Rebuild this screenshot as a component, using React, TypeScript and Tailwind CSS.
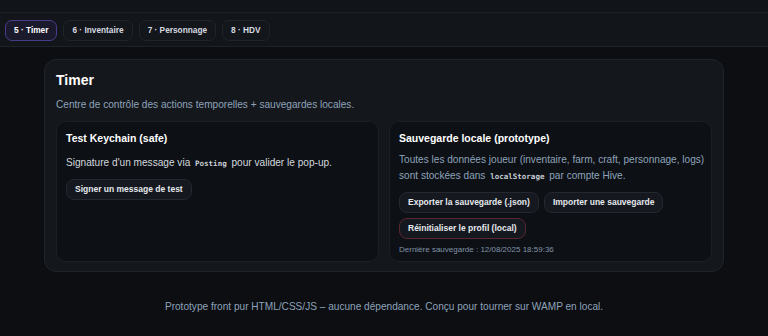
const tabs = ["5 · Timer", "6 · Inventaire", "7 · Personnage", "8 · HDV"];

function Btn({ children, danger }: { children: React.ReactNode; danger?: boolean }) {
  return (
    <button
      className={
        "h-[21px] px-[8px] rounded-[8px] bg-[#15181e] text-[8.5px] font-bold text-[#e6e9ee] border " +
        (danger ? "border-[#5a2630]" : "border-[#242830]")
      }
    >
      {children}
    </button>
  );
}

export default function App() {
  return (
    <div className="min-h-screen bg-[#0c0e12] font-['Liberation_Sans',Arial,sans-serif] text-[#e6e9ee]">
      <div className="h-[13px] bg-[#111418] border-b border-[#1d2128]"></div>
      <nav className="flex gap-[6px] px-[5px] pt-[7px] pb-[5px] bg-[#121519] border-b border-[#1d2128]">
        {tabs.map((t, i) => (
          <button
            key={t}
            className={
              "h-[21px] px-[8px] rounded-[7px] text-[8.3px] font-bold border " +
              (i === 0
                ? "bg-[#1a1a2c] border-[#4a3b8c] text-white"
                : "bg-[#13161b] border-[#20242b] text-[#d6dae0]")
            }
          >
            {t}
          </button>
        ))}
      </nav>

      <main className="px-[44px] pt-[12px]">
        <section className="rounded-[12px] bg-[#14171c] border border-[#1f232a] px-[11px] pt-[10px] pb-[9px]">
          <h2 className="text-[14px] font-bold leading-[20px] text-white">Timer</h2>
          <p className="mt-[7px] text-[10.1px] leading-[16px] text-[#8ea3ba]">
            Centre de contrôle des actions temporelles + sauvegardes locales.
          </p>
          <div className="mt-[8px] grid grid-cols-2 gap-[10px]">
            <div className="h-[141px] rounded-[10px] bg-[#0d1014] border border-[#1b1f26] px-[9px] pt-[9px]">
              <h3 className="text-[10.5px] font-bold leading-[14px] text-white">Test Keychain (safe)</h3>
              <p className="mt-[10px] text-[10.1px] leading-[16px] text-[#d3d8df]">
                Signature d'un message via{" "}
                <code className="mx-[2px] font-['DejaVu_Sans_Mono',monospace] text-[7.5px] leading-none font-bold text-[#c9ced6]">Posting</code>{" "}
                pour valider le pop-up.
              </p>
              <div className="mt-[8px] flex">
                <Btn>Signer un message de test</Btn>
              </div>
            </div>
            <div className="h-[141px] rounded-[10px] bg-[#0d1014] border border-[#1b1f26] px-[9px] pt-[9px]">
              <h3 className="text-[10.5px] font-bold leading-[14px] text-white">Sauvegarde locale (prototype)</h3>
              <p className="mt-[7px] whitespace-nowrap text-[10.1px] leading-[16px] text-[#8ea3ba]">
                Toutes les données joueur (inventaire, farm, craft, personnage, logs)
                <br />
                sont stockées dans{" "}
                <code className="mx-[2px] font-['DejaVu_Sans_Mono',monospace] text-[7.5px] leading-none font-bold text-[#c9ced6]">localStorage</code>{" "}
                par compte Hive.
              </p>
              <div className="mt-[8px] flex flex-wrap gap-x-[5px] gap-y-[5px]">
                <Btn>Exporter la sauvegarde (.json)</Btn>
                <Btn>Importer une sauvegarde</Btn>
                <Btn danger>Réinitialiser le profil (local)</Btn>
              </div>
              <p className="mt-[5px] text-[8px] leading-[12px] text-[#8294a8]">
                Dernière sauvegarde : 12/08/2025 18:59:36
              </p>
            </div>
          </div>
        </section>
      </main>

      <footer className="pt-[27px] text-center text-[10.1px] leading-[16px] text-[#8ea3ba]">
        Prototype front pur HTML/CSS/JS – aucune dépendance. Conçu pour tourner sur WAMP en local.
      </footer>
    </div>
  );
}
